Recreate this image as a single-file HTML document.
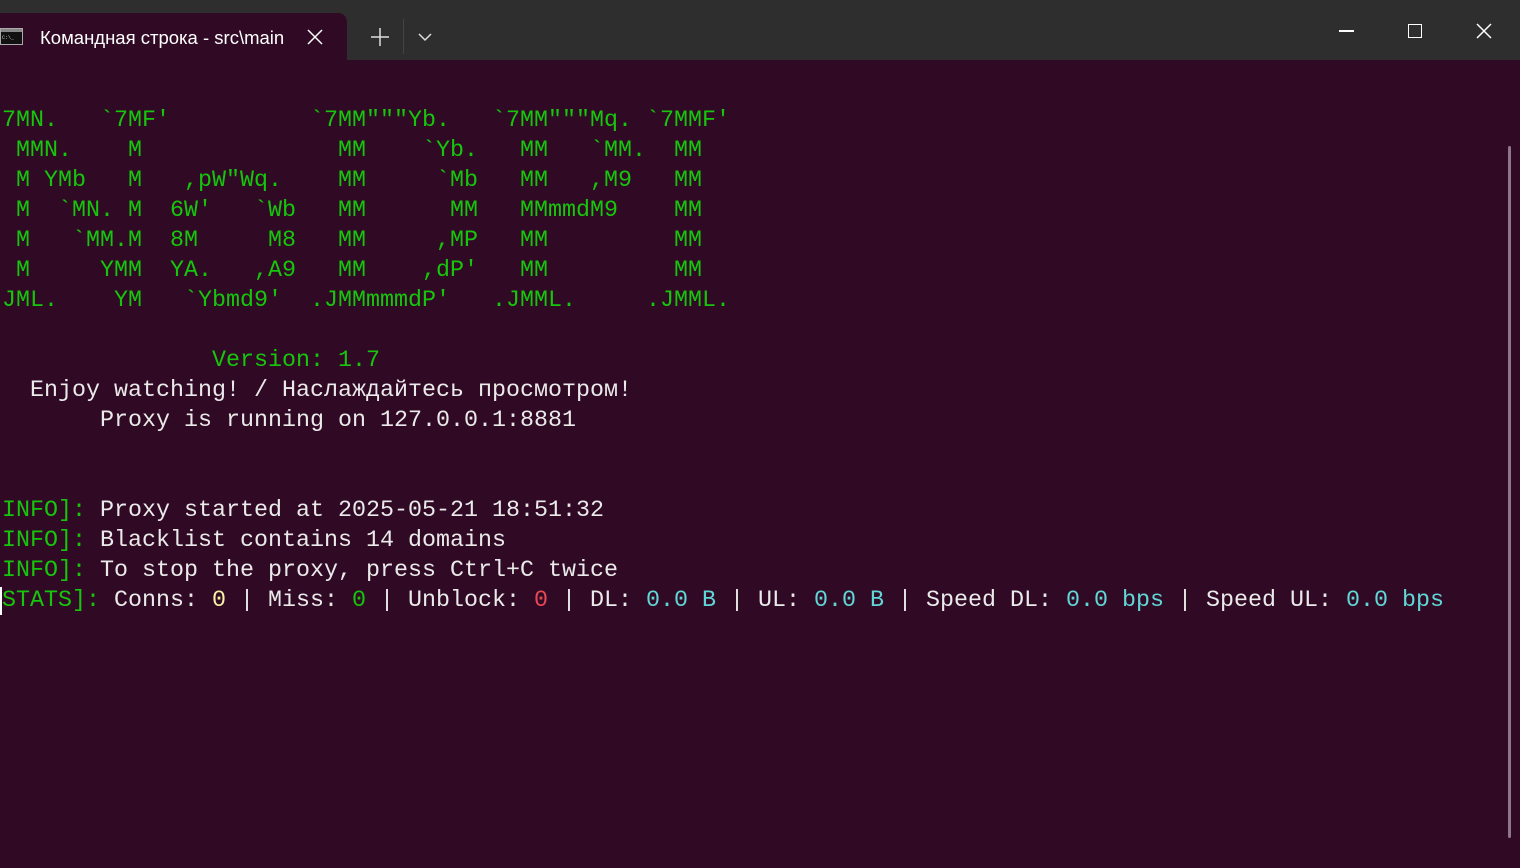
<!DOCTYPE html>
<html><head><meta charset="utf-8"><style>
html,body{margin:0;padding:0;width:1520px;height:868px;overflow:hidden;background:#300a24}
.title{position:absolute;left:0;top:0;width:1520px;height:60px;background:#2e2e2e}
.tab{position:absolute;left:0;top:13px;width:347px;height:47px;background:#300a24;border-radius:0 9px 0 0}
.tabtext{position:absolute;left:40px;top:27px;font:18.5px "Liberation Sans",sans-serif;color:#fff;white-space:nowrap}
pre{position:absolute;left:2px;top:106px;margin:0;font-family:"Liberation Mono","DejaVu Sans Mono",monospace;font-size:23.33px;line-height:30px;color:#eaeaea}
.g{color:#16c60c}.c{color:#61d6d6}.y{color:#f9f1a5}.r{color:#e74856}
.sb{position:absolute;left:1508px;top:146px;width:3px;height:692px;background:#8e7688;border-radius:2px}
</style></head><body>
<div class="title"></div>
<div class="tab"></div>
<svg style="position:absolute;left:0;top:28px" width="24" height="18"><rect x="0.5" y="0.5" width="22" height="16" fill="#111" stroke="#aaa"/><rect x="1" y="1" width="21" height="3" fill="#888"/><text x="2" y="11" font-size="5" fill="#ccc" font-family="Liberation Mono">C:\_</text></svg>
<div class="tabtext">Командная строка - src\main</div>
<svg style="position:absolute;left:306px;top:28px" width="18" height="18"><path d="M2 2L16 16M16 2L2 16" stroke="#fff" stroke-width="1.5"/></svg>
<svg style="position:absolute;left:370px;top:27px" width="20" height="20"><path d="M10 1V19M1 10H19" stroke="#ddd" stroke-width="1.5"/></svg>
<div style="position:absolute;left:403px;top:19px;width:1px;height:35px;background:#444"></div>
<svg style="position:absolute;left:418px;top:32px" width="14" height="10"><path d="M1 2L7 8L13 2" stroke="#ddd" stroke-width="1.5" fill="none"/></svg>
<div style="position:absolute;left:1339px;top:30px;width:15px;height:1.5px;background:#fff"></div>
<div style="position:absolute;left:1408px;top:24px;width:12px;height:12px;border:1.5px solid #fff"></div>
<svg style="position:absolute;left:1476px;top:23px" width="16" height="16"><path d="M1 1L15 15M15 1L1 15" stroke="#fff" stroke-width="1.5"/></svg>
<pre><span class="g">7MN.   `7MF'          `7MM"""Yb.   `7MM"""Mq. `7MMF'
 MMN.    M              MM    `Yb.   MM   `MM.  MM
 M YMb   M   ,pW"Wq.    MM     `Mb   MM   ,M9   MM
 M  `MN. M  6W'   `Wb   MM      MM   MMmmdM9    MM
 M   `MM.M  8M     M8   MM     ,MP   MM         MM
 M     YMM  YA.   ,A9   MM    ,dP'   MM         MM
JML.    YM   `Ybmd9'  .JMMmmmdP'   .JMML.     .JMML.

               Version: 1.7</span>
  Enjoy watching! / Наслаждайтесь просмотром!
       Proxy is running on 127.0.0.1:8881


<span class="g">INFO]:</span> Proxy started at 2025-05-21 18:51:32
<span class="g">INFO]:</span> Blacklist contains 14 domains
<span class="g">INFO]:</span> To stop the proxy, press Ctrl+C twice
<span class="g">STATS]:</span> Conns: <span class="y">0</span> | Miss: <span class="g">0</span> | Unblock: <span class="r">0</span> | DL: <span class="c">0.0 B</span> | UL: <span class="c">0.0 B</span> | Speed DL: <span class="c">0.0 bps</span> | Speed UL: <span class="c">0.0 bps</span></pre>
<div style="position:absolute;left:0;top:587px;width:2px;height:28px;background:#fff"></div>
<div class="sb"></div>
</body></html>
